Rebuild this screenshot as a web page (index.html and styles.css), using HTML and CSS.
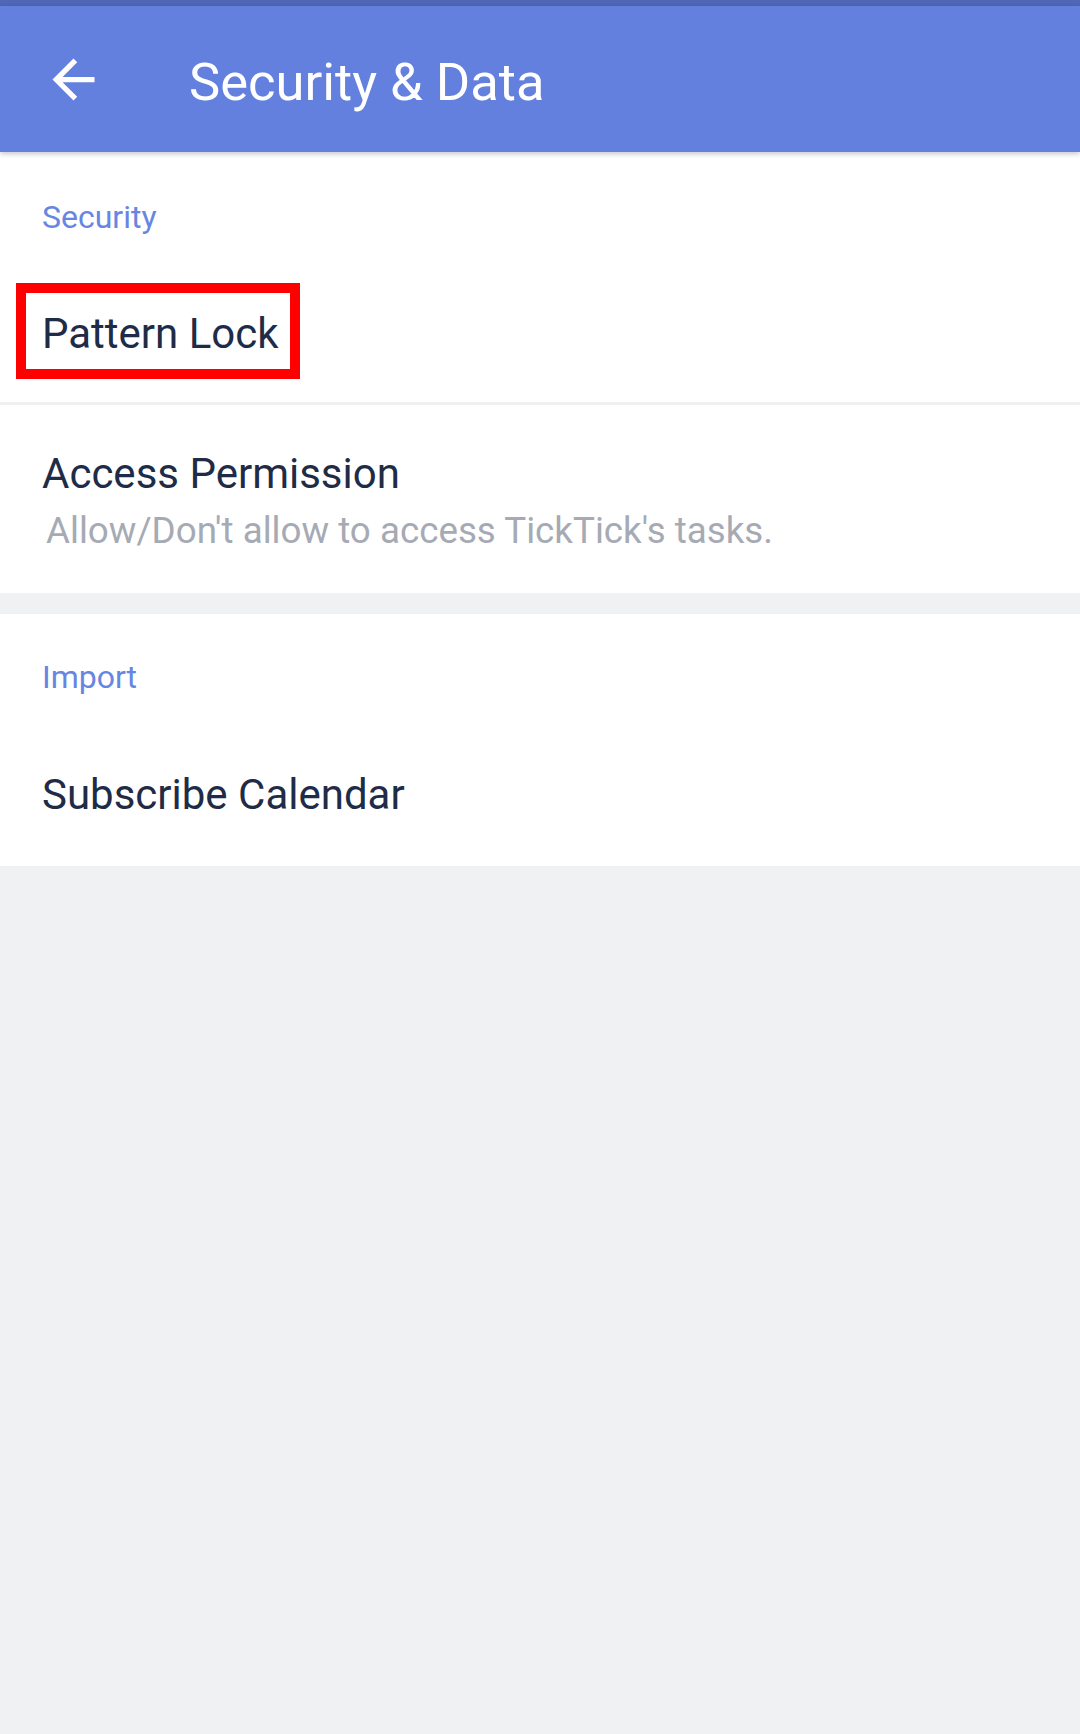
FILE: index.html
```html
<!DOCTYPE html>
<html lang="en">
<head>
<meta charset="utf-8">
<title>Security &amp; Data</title>
<link rel="stylesheet" href="styles.css">
</head>
<body>
<div class="statusbar"></div>
<header class="toolbar">
  <svg class="back" viewBox="0 0 24 24" width="63" height="63" aria-hidden="true">
    <path d="M20 11H7.83l5.59-5.59L12 4l-8 8 8 8 1.41-1.41L7.83 13H20v-2z" fill="#ffffff"/>
  </svg>
  <h1 class="title">Security &amp; Data</h1>
</header>
<main>
  <section class="card">
    <div class="label label-first">Security</div>
    <div class="row row-single row-divider">
      <span class="row-title hl">Pattern Lock</span>
    </div>
    <div class="row row-double">
      <div class="row-title">Access Permission</div>
      <div class="row-sub">Allow/Don't allow to access TickTick's tasks.</div>
    </div>
  </section>
  <section class="card">
    <div class="label label-second">Import</div>
    <div class="row row-single row-last">
      <span class="row-title">Subscribe Calendar</span>
    </div>
  </section>
</main>
</body>
</html>
```

FILE: styles.css
```css
html, body {
  margin: 0;
  padding: 0;
}
body {
  width: 1080px;
  min-height: 1734px;
  background: #f0f1f3;
  font-family: Roboto, "Noto Sans", "Liberation Sans", sans-serif;
}
* { box-sizing: border-box; }

.statusbar {
  height: 6px;
  background: #4f67b4;
}
.toolbar {
  position: relative;
  z-index: 2;
  height: 146px;
  background: #6380df;
  display: flex;
  align-items: center;
  box-shadow: 0 2px 5px rgba(0, 0, 0, 0.22);
}
.back {
  display: block;
  margin-left: 42px;
  flex: none;
}
.title {
  margin: 6px 0 0 84px;
  font-size: 52.5px;
  line-height: 63px;
  font-weight: 400;
  color: #ffffff;
}

.card {
  background: #ffffff;
  margin-bottom: 21px;
}
.label {
  padding-left: 42px;
  font-size: 32px;
  line-height: 40px;
  color: #6786e2;
}
.label-first {
  height: 110px;
  padding-top: 45px;
}
.label-second {
  height: 112px;
  padding-top: 43px;
}
.row {
  padding-left: 42px;
}
.row-title {
  font-size: 42px;
  line-height: 50px;
  color: #1f2c47;
}
.row-single {
  height: 140px;
  padding-top: 47px;
}
.row-last {
  padding-top: 44px;
}
.row-divider {
  height: 143px;
  border-bottom: 3px solid #eff0f2;
}
.row-double {
  height: 188px;
  padding-top: 44px;
}
.row-double .row-title {
  display: block;
}
.row-sub {
  margin-top: 10px;
  margin-left: 4px;
  font-size: 36.75px;
  line-height: 44px;
  color: #a6aab4;
}

.hl {
  position: relative;
  display: inline-block;
}
.hl::after {
  content: "";
  position: absolute;
  left: -26px;
  top: -26px;
  right: -21px;
  bottom: -20px;
  border: 10px solid #ff0000;
}
```
